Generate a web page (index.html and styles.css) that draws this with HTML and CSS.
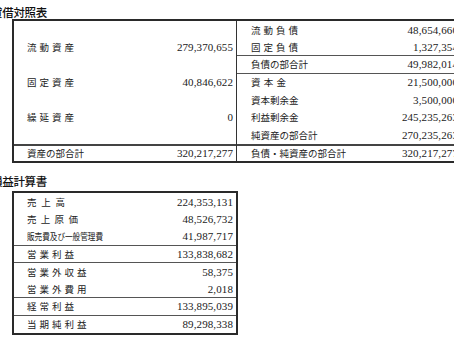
FILE: index.html
```html
<!DOCTYPE html>
<html lang="ja">
<head>
<meta charset="utf-8">
<link rel="stylesheet" href="styles.css">
</head>
<body>
<div class="page">
  <h2 class="title">貸借対照表</h2>
  <div class="bs">
    <div class="col col-left">
      <div class="row"></div>
      <div class="row"><span class="lbl sp3">流動資産</span><span class="num">279,370,655</span></div>
      <div class="row"></div>
      <div class="row"><span class="lbl sp3">固定資産</span><span class="num">40,846,622</span></div>
      <div class="row"></div>
      <div class="row"><span class="lbl sp3">繰延資産</span><span class="num">0</span></div>
      <div class="row"></div>
      <div class="row total"><span class="lbl">資産の部合計</span><span class="num">320,217,277</span></div>
    </div>
    <div class="col col-right">
      <div class="row"><span class="lbl sp3">流動負債</span><span class="num">48,654,660</span></div>
      <div class="row line-b"><span class="lbl sp3">固定負債</span><span class="num">1,327,354</span></div>
      <div class="row line-b"><span class="lbl">負債の部合計</span><span class="num">49,982,014</span></div>
      <div class="row"><span class="lbl sp3b">資本金</span><span class="num">21,500,000</span></div>
      <div class="row"><span class="lbl">資本剰余金</span><span class="num">3,500,000</span></div>
      <div class="row"><span class="lbl">利益剰余金</span><span class="num">245,235,263</span></div>
      <div class="row"><span class="lbl">純資産の部合計</span><span class="num">270,235,263</span></div>
      <div class="row total"><span class="lbl">負債・純資産の部合計</span><span class="num">320,217,277</span></div>
    </div>
  </div>

  <h2 class="title title2">損益計算書</h2>
  <div class="pl">
    <div class="row"><span class="lbl sp5">売上高</span><span class="num">224,353,131</span></div>
    <div class="row"><span class="lbl sp4">売上原価</span><span class="num">48,526,732</span></div>
    <div class="row line-b"><span class="lbl cond">販売費及び一般管理費</span><span class="num">41,987,717</span></div>
    <div class="row line-b"><span class="lbl sp3">営業利益</span><span class="num">133,838,682</span></div>
    <div class="row"><span class="lbl sp3">営業外収益</span><span class="num">58,375</span></div>
    <div class="row line-b"><span class="lbl sp3">営業外費用</span><span class="num">2,018</span></div>
    <div class="row line-b"><span class="lbl sp3">経常利益</span><span class="num">133,895,039</span></div>
    <div class="row"><span class="lbl sp3">当期純利益</span><span class="num">89,298,338</span></div>
  </div>
</div>
</body>
</html>
```

FILE: styles.css
```css
html, body {
  margin: 0;
  padding: 0;
  background: #ffffff;
  overflow: hidden;
}

body {
  font-family: "Liberation Serif", "Noto Sans CJK JP", serif;
  color: #1c1c1c;
}

.page {
  margin-left: -9px;
  padding-top: 5px;
  width: 480px;
}

.title {
  margin: 0;
  font-family: "Noto Sans CJK JP", sans-serif;
  font-size: 11.5px;
  line-height: 14px;
  font-weight: 500;
  letter-spacing: -0.3px;
  color: #111;
}

.title2 {
  margin-top: 11px;
  margin-bottom: 3px;
}

.bs {
  box-sizing: border-box;
  display: flex;
  margin-left: 21px;
  border: 2px solid #2a2a2a;
  border-right: none;
  width: 448px;
}

.col-left {
  width: 222px;
  flex: none;
  border-right: 1.5px solid #333;
}

.col-right {
  flex: 1;
  min-width: 0;
}

.row {
  box-sizing: border-box;
  height: 17.5px;
  display: flex;
  align-items: center;
  justify-content: space-between;
  padding: 0 3px 0 13px;
}

.col-right .row {
  padding-left: 14px;
  padding-right: 2px;
}

.row.total {
  border-top: 2px solid #444;
}

.line-b {
  border-bottom: 1px solid #555;
}

.lbl {
  font-family: "Noto Sans CJK JP", sans-serif;
  font-size: 9.5px;
  color: #222;
  white-space: nowrap;
}

.sp3 { letter-spacing: 3px; }
.sp3b { letter-spacing: 3.3px; }
.sp4 { letter-spacing: 4.3px; }
.sp5 { letter-spacing: 4.7px; }

.cond {
  display: inline-block;
  transform: scaleX(0.8);
  transform-origin: left center;
}

.num {
  font-size: 11px;
  letter-spacing: 0.1px;
  color: #1a1a1a;
}

.pl {
  box-sizing: border-box;
  margin-left: 21px;
  width: 226px;
  border: 2px solid #2a2a2a;
}
```
